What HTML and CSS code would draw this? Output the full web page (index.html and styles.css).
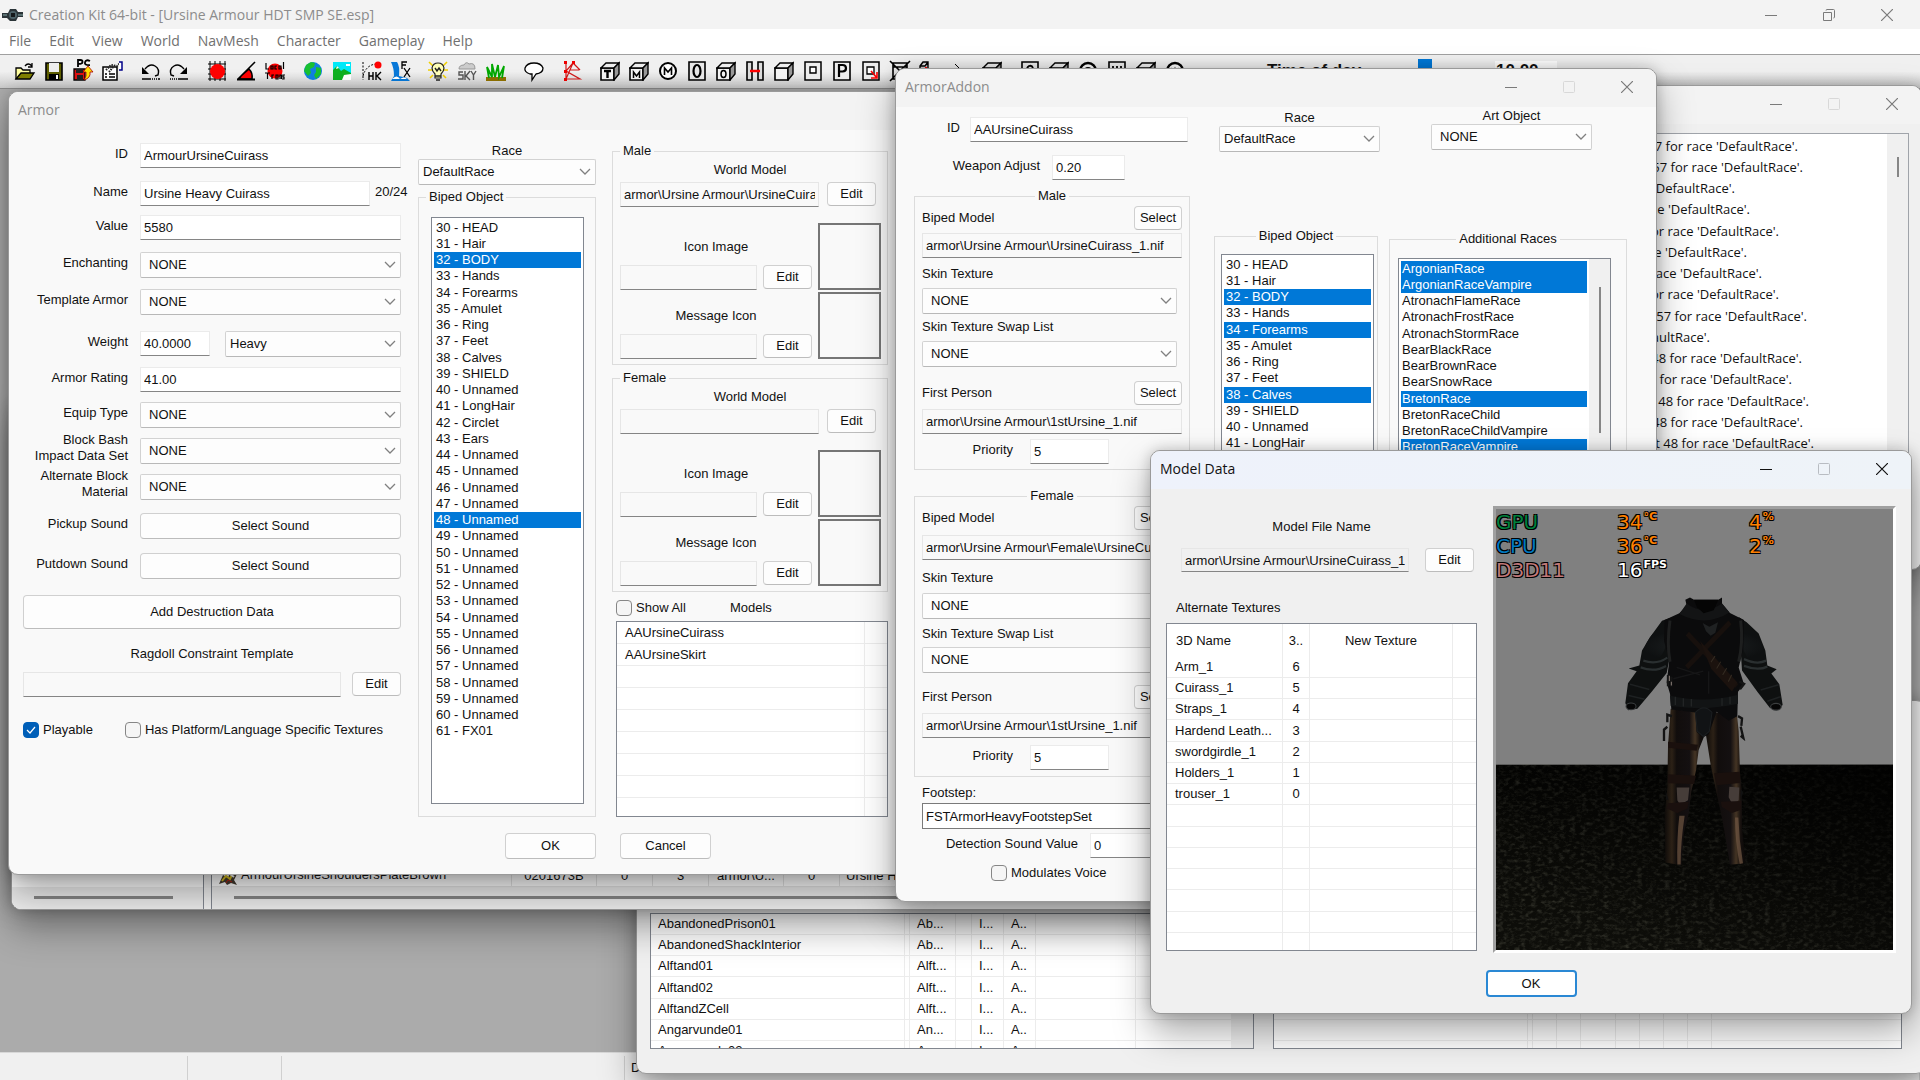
FILE: index.html
```html
<!DOCTYPE html>
<html lang="en">
<head>
<meta charset="utf-8">
<title>Creation Kit 64-bit</title>
<link rel="stylesheet" href="styles.css">
</head>
<body>
<svg class="defs" aria-hidden="true">
  <defs>
    <symbol id="cube" viewBox="0 0 20 20"><path d="M1 7h13v12H1z" fill="#f4f4f4" stroke="#000" stroke-width="1.6"/><path d="M1 7l5-5h13l-5 5z" fill="#eee" stroke="#000" stroke-width="1.4"/><path d="M14 7l5-5v11l-5 6z" fill="#999" stroke="#000" stroke-width="1.4"/></symbol>
    <symbol id="min" viewBox="0 0 12 12"><path d="M0 6.5h12" stroke="currentColor"/></symbol>
    <symbol id="max" viewBox="0 0 12 12"><rect x=".5" y=".5" width="11" height="11" rx="1" fill="none" stroke="currentColor"/></symbol>
    <symbol id="close" viewBox="0 0 12 12"><path d="M0 0l12 12M12 0L0 12" stroke="currentColor" stroke-width="1.2"/></symbol>
  </defs>
</svg>

<div class="app">
  <header class="app-title">
    <svg class="app-icon" viewBox="0 0 22 16"><path d="M0 6h6l2-4h6l2 3h5v5h-5l-2 4H8l-3-3H0z" fill="#2b3438"/><circle cx="11" cy="8" r="4" fill="#4d6268"/><path d="M1 8h4M16 8h5" stroke="#8aa"/><path d="M9 6h4v4H9z" fill="#15191b"/></svg>
    <h1>Creation Kit 64-bit - [Ursine Armour HDT SMP SE.esp]</h1>
    <div class="caption">
      <button aria-label="Minimize"><svg><use href="#min"/></svg></button>
      <button aria-label="Restore"><svg viewBox="0 0 12 12"><path d="M.5 3.5h8v8h-8zM3 1.5q0-1 1-1h6.500q1 0 1 1v6.500q0 1-1 1" fill="none" stroke="currentColor"/></svg></button>
      <button aria-label="Close"><svg><use href="#close"/></svg></button>
    </div>
  </header>
  <nav class="menu">
    <a href="#">File</a><a href="#">Edit</a><a href="#">View</a><a href="#">World</a><a href="#">NavMesh</a><a href="#">Character</a><a href="#">Gameplay</a><a href="#">Help</a>
  </nav>
  <div class="toolbar">
    <div class="tools">
      <button aria-label="Open"><svg viewBox="0 0 20 20"><path d="M1 18V7h5l2 2h7v3" fill="#ffffa0" stroke="#000" stroke-width="1.3"/><path d="M1 18l5-6h13l-4 6z" fill="#808000" stroke="#000" stroke-width="1.3"/><path d="M10 5q3-4 7 0m0-3v4h-4" fill="none" stroke="#000" stroke-width="1.3"/></svg></button>
      <button aria-label="Save"><svg viewBox="0 0 20 20"><path d="M2 2h16v17H2z" fill="#606000" stroke="#000" stroke-width="1.6"/><path d="M5 2h10v9H5z" fill="#eee"/><path d="M5 13h10v6H5z" fill="#000"/><path d="M12 14h2v4h-2z" fill="#fff"/></svg></button>
      <button aria-label="Save for PC"><svg viewBox="0 0 20 20"><path d="M1 8h11v11H1z" fill="#e01010" stroke="#000" stroke-width="1.300"/><path d="M3 8h7v4H3zM4 14h6v5H4z" fill="#222"/><path d="M5 6V-1h2.500q2 0 2 1.800T7.500 2.800H5M17 0q-4-2-5 1.200t5 3" fill="none" stroke="#000" stroke-width="1.800"/><path d="M15 5l5 6h-3q1 6-6 8 3-4 2-8h-3z" fill="#ffe000" stroke="#a00" stroke-width=".8"/></svg></button>
      <button aria-label="Preferences"><svg viewBox="0 0 20 20"><path d="M1 6h14v13H1z" fill="#fff" stroke="#000" stroke-width="1.5"/><path d="M3 13h2m2 0h6M3 16h2m2 0h6" stroke="#000" stroke-width="1.3"/><path d="M4 9l5-5 6 1 3-3M7 11l5-6" stroke="#222" stroke-width="2" stroke-dasharray="1.500 1" fill="none"/><path d="M17 1h3v8h-3" fill="#fff" stroke="#008" stroke-width="1.500"/></svg></button>
      <span class="gap"></span>
      <button aria-label="Undo"><svg viewBox="0 0 20 20"><path d="M5 8q5-6 10-3t3 9l-3 1" fill="none" stroke="#000" stroke-width="1.400"/><path d="M2 6v7h7z"/><path d="M2 18h18" stroke="#000" stroke-width="1.600" stroke-dasharray="9 1 1 1 1 1 1 1"/></svg></button>
      <button aria-label="Redo"><svg viewBox="0 0 20 20"><path d="M15 8q-5-6-10-3T2 14l3 1" fill="none" stroke="#000" stroke-width="1.400"/><path d="M18 6v7h-7z"/><path d="M1 18h18" stroke="#000" stroke-width="1.600" stroke-dasharray="1 1 1 1 1 1 1 1 11"/></svg></button>
      <span class="gap"></span>
      <button aria-label="Snap to grid"><svg viewBox="0 0 20 20"><path d="M1 3h18M1 8h18M1 13h18M1 18h18M3 0v20M8 0v20M13 0v20M18 0v20" stroke="#000"/><circle cx="10.500" cy="10.500" r="7.500" fill="#f00"/></svg></button>
      <button aria-label="Snap to angle"><svg viewBox="0 0 20 20"><path d="M2 18L19 1M5 15l8-7q4 4 3 10H3z" fill="#f00" stroke="#000" stroke-width="1.600"/><path d="M1 18.500h18" stroke="#000" stroke-width="2"/></svg></button>
      <button aria-label="Local translation"><svg viewBox="0 0 20 20"><circle cx="10" cy="10" r="7.500" fill="#f00"/><path d="M1 2v6h3M6 5h2v3H6zM12 5h-2v3h2M14 5h2v3h-2zM18.500 1v7M0 12h5M2.500 12v6M7 18v-4h2M11 14h2v4h-2zM15 18v-4h1.500v4M20 14h-2v2h1v2h-2" fill="none" stroke="#000" stroke-width="1.200"/></svg></button>
      <span class="gap"></span>
      <button aria-label="World"><svg viewBox="0 0 20 20"><circle cx="10" cy="10" r="9" fill="#1080e0"/><path d="M3 4l5-3 4 1-1 4-4 2 1 4-3 3-4-5zM13 6l5 1v6l-5 5-2-4 2-3z" fill="#18c030"/></svg></button>
      <button aria-label="Landscape"><svg viewBox="0 0 20 20"><path d="M1 1h18v18H1z" fill="#00e8f8"/><path d="M1 9l4-4 4 5 3-2 7 4v7H1z" fill="#10b020"/><path d="M10 19l2-5 7-1v6z" fill="#fff"/><path d="M5 5l2 2-3 1zM14 3h4v2h-4z" fill="#fff"/></svg></button>
      <button aria-label="Havok"><svg viewBox="0 0 20 20"><path d="M2 1v18M2 15Q5 4 15 3" fill="none" stroke="#000" stroke-dasharray="2 1.500"/><circle cx="17" cy="4" r="3.500" fill="#f00"/><path d="M8 11v8m0-4h4m0-4v8M15 11v8m5-8l-4 4 4 4" fill="none" stroke="#000" stroke-width="1.400"/></svg></button>
      <button aria-label="Effects"><svg viewBox="0 0 20 20"><path d="M1 1h6q3 4 2 14l8 2 3 3H1l3-5q0-8-3-14z" fill="#0878d8"/><path d="M2 18q5-5 8 0 4-3 7 0" fill="#fff"/><path d="M12 8V1h5m-5 3h4M14 7l6 9m0-9l-6 9" fill="none" stroke="#000" stroke-width="1.300"/></svg></button>
      <span class="gap"></span>
      <button aria-label="Light"><svg viewBox="0 0 20 20"><path d="M1 1l4 4M19 1l-4 4M0 9h4M16 9h4M2 17l3-3M18 17l-3-3" stroke="#f0d000" stroke-width="1.600"/><path d="M7 13q-3-3-3-6 1-5 6-5t6 5q0 3-3 6v4H7z" fill="#ffffb8" stroke="#222" stroke-width="1.200"/><path d="M7 7l2 3 2-3 2 3M7 15h6M8 19h4" fill="none" stroke="#222" stroke-width="1.400"/></svg></button>
      <button aria-label="Sky"><svg viewBox="0 0 20 20"><path d="M2 8q0-4 5-4 2-4 5-1 6-2 6 5z" fill="#ccc" stroke="#999"/><path d="M6 11H2v3h4v4H1M8 10v9m5-9l-4 5 4 4M14 10l2.500 4L19 10m-2.500 4v5" fill="none" stroke="#555" stroke-width="1.400"/></svg></button>
      <button aria-label="Grass"><svg viewBox="0 0 20 20"><path d="M0 16h20v4H0z" fill="#907000"/><path d="M3 17L1 6l5 10V3l3 13 3-12 1 12 5-11-2 12" fill="none" stroke="#00a800" stroke-width="1.800"/></svg></button>
      <span class="gap"></span>
      <button aria-label="Dialogue"><svg viewBox="0 0 20 20"><path d="M6 13Q0 11 1 7q2-5 9-5t9 5q0 5-7 6l-4 6v-6z" fill="#fff" stroke="#000" stroke-width="1.300"/></svg></button>
      <span class="gap"></span>
      <button aria-label="NavMesh"><svg viewBox="0 0 20 20"><path d="M4 1v17h14L4 10l7-8 7 7M4 18l7-16M8 9h9" fill="none" stroke="#d01818" stroke-width="1.200"/><path d="M2 0h3v3H2zM10 0h3v3h-3zM2 9h3v3H2zM2 17h3v3H2z" fill="#e00"/></svg></button>
      <span class="gap"></span>
      <button aria-label="Trigger"><svg viewBox="0 0 20 20"><use href="#cube"/><path d="M4 10h7M7.500 10v7" stroke="#000" stroke-width="2.400"/></svg></button>
      <button aria-label="Multibound"><svg viewBox="0 0 20 20"><use href="#cube"/><path d="M4.500 17v-6l3 4 3-4v6" fill="none" stroke="#000" stroke-width="1.500"/></svg></button>
      <button aria-label="Markers"><svg viewBox="0 0 20 20"><circle cx="10" cy="10" r="8" fill="#fff" stroke="#000" stroke-width="2"/><path d="M6.500 14V7l3.500 4 3.500-4v7" fill="none" stroke="#000" stroke-width="1.600"/></svg></button>
      <button aria-label="Occlusion plane"><svg viewBox="0 0 20 20"><path d="M2 1h16v18H2z" fill="#e8e8e8" stroke="#000" stroke-width="1.600"/><ellipse cx="10" cy="10" rx="3.500" ry="6" fill="none" stroke="#000" stroke-width="2.200"/></svg></button>
      <button aria-label="Occlusion cube"><svg viewBox="0 0 20 20"><use href="#cube"/><ellipse cx="7.500" cy="13" rx="2.500" ry="3.500" fill="none" stroke="#000" stroke-width="1.500"/></svg></button>
      <button aria-label="Portal link"><svg viewBox="0 0 20 20"><path d="M2 1h5v18H2zM13 1h5v18h-5z" fill="#ddd" stroke="#000" stroke-width="1.600"/><path d="M5 10h10" stroke="#f00" stroke-width="2.500"/></svg></button>
      <button aria-label="Room"><svg viewBox="0 0 20 20"><use href="#cube"/></svg></button>
      <button aria-label="Portal"><svg viewBox="0 0 20 20"><path d="M2 1h16v18H2z" fill="#eee" stroke="#000" stroke-width="1.500"/><path d="M7 6h6v6H7z" fill="#fff" stroke="#000" stroke-width="1.400"/></svg></button>
      <button aria-label="Primitive"><svg viewBox="0 0 20 20"><path d="M2 1h16v18H2z" fill="#eee" stroke="#000" stroke-width="1.600"/><path d="M7 16V4h3.500q3.500 0 3.500 3.200T10.500 10.500H7" fill="none" stroke="#000" stroke-width="2.200"/></svg></button>
      <button aria-label="Link"><svg viewBox="0 0 20 20"><path d="M2 1h16v18H2z" fill="#eee" stroke="#000" stroke-width="1.500"/><path d="M6 6h7v7H6z" fill="#fff" stroke="#000" stroke-width="1.300"/><path d="M10 10l6 7m0-6v6h-6" fill="none" stroke="#f00" stroke-width="1.600"/></svg></button>
      <button aria-label="Hide"><svg viewBox="0 0 20 20"><path d="M3 2h14v16H3zM0 0l20 20M20 0L0 20M3 6h14" fill="none" stroke="#000" stroke-width="1.600"/></svg></button>
      <button class="narrow" aria-label="Collision"><svg viewBox="0 0 10 20"><path d="M1 5l3-4h5v8H1zM1 5h5l3-4" fill="#ccc" stroke="#000" stroke-width="1.400"/><path d="M7 6v4" stroke="#f00" stroke-width="2"/></svg></button>
      <span class="gap"></span>
      <button aria-label="Line"><svg viewBox="0 0 20 20"><path d="M8 3l6 6" stroke="#000"/></svg></button>
      <span class="gap short"></span>
      <button aria-label="Trap"><svg viewBox="0 0 20 20"><use href="#cube"/><path d="M4 10h7" stroke="#000" stroke-width="2"/></svg></button>
      <span class="gap"></span>
      <button aria-label="Combat"><svg viewBox="0 0 20 20"><path d="M2 1h16v18H2z" fill="#eee" stroke="#000" stroke-width="1.600"/><path d="M13 7q-1-3-4-2-3 2-2 6" fill="none" stroke="#000" stroke-width="1.800"/></svg></button>
      <button aria-label="Box"><svg viewBox="0 0 20 20"><use href="#cube"/></svg></button>
      <button aria-label="Sound"><svg viewBox="0 0 20 20"><circle cx="10" cy="10" r="8" fill="#fff" stroke="#000" stroke-width="2.400"/><circle cx="10" cy="10" r="3" fill="none" stroke="#000" stroke-width="2"/></svg></button>
      <button aria-label="Water"><svg viewBox="0 0 20 20"><path d="M2 1h16v18H2z" fill="#eee" stroke="#000" stroke-width="1.600"/><path d="M6 5v9h8V5M10 5v9" fill="none" stroke="#000" stroke-width="1.800"/></svg></button>
      <button aria-label="Activator"><svg viewBox="0 0 20 20"><use href="#cube"/></svg></button>
      <button aria-label="Wind"><svg viewBox="0 0 20 20"><circle cx="10" cy="10" r="8" fill="#fff" stroke="#000" stroke-width="2.400"/><path d="M6 7l2 7 2-6 2 6 2-7" fill="none" stroke="#000" stroke-width="1.600"/></svg></button>
    </div>
    <label class="tod" for="tod">Time of day</label>
    <input id="tod" class="tod-slider" type="range" min="0" max="24" value="10">
    <input class="tod-value" type="text" value="10.00" aria-label="Hour">
  </div>
  <main class="workspace"></main>
  <footer class="status"><span></span><span></span><span></span><span>Done.</span></footer>
</div>

<section class="window warnings" aria-label="Warnings">
  <div class="titlebar"><h2></h2><div class="caption">
    <button aria-label="Minimize"><svg><use href="#min"/></svg></button>
    <button aria-label="Maximize" disabled><svg><use href="#max"/></svg></button>
    <button aria-label="Close"><svg><use href="#close"/></svg></button></div></div>
  <div class="log">
    <ul>
      <li style="width:378px">57 for race 'DefaultRace'.</li>
      <li style="width:383px">57 for race 'DefaultRace'.</li>
      <li style="width:315px">'DefaultRace'.</li>
      <li style="width:330px">race 'DefaultRace'.</li>
      <li style="width:359px">for race 'DefaultRace'.</li>
      <li style="width:327px">race 'DefaultRace'.</li>
      <li style="width:342px">race 'DefaultRace'.</li>
      <li style="width:359px">for race 'DefaultRace'.</li>
      <li style="width:387px">57 for race 'DefaultRace'.</li>
      <li style="width:290px">'DefaultRace'.</li>
      <li style="width:382px">48 for race 'DefaultRace'.</li>
      <li style="width:372px">for race 'DefaultRace'.</li>
      <li style="width:389px">48 for race 'DefaultRace'.</li>
      <li style="width:383px">48 for race 'DefaultRace'.</li>
      <li style="width:394px">slot 48 for race 'DefaultRace'.</li>
    </ul>
    <div class="vscroll"><span></span></div>
  </div>
</section>

<section class="window cellview" aria-label="Cell View">
  <div class="grid-box cells">
    <table>
      <colgroup><col class="w254"><col class="w5"><col class="w46"><col class="w16"><col class="w32"><col class="w32"><col class="w100"><col></colgroup>
      <tbody>
        <tr><td>AbandonedPrison01</td><td></td><td>Ab...</td><td></td><td>I...</td><td>A..</td><td></td><td></td></tr>
        <tr><td>AbandonedShackInterior</td><td></td><td>Ab...</td><td></td><td>I...</td><td>A..</td><td></td><td></td></tr>
        <tr><td>Alftand01</td><td></td><td>Alft...</td><td></td><td>I...</td><td>A..</td><td></td><td></td></tr>
        <tr><td>Alftand02</td><td></td><td>Alft...</td><td></td><td>I...</td><td>A..</td><td></td><td></td></tr>
        <tr><td>AlftandZCell</td><td></td><td>Alft...</td><td></td><td>I...</td><td>A..</td><td></td><td></td></tr>
        <tr><td>Angarvunde01</td><td></td><td>An...</td><td></td><td>I...</td><td>A..</td><td></td><td></td></tr>
        <tr><td>Angarvunde02</td><td></td><td>An...</td><td></td><td>I...</td><td>A..</td><td></td><td></td></tr>
      </tbody>
    </table>
    <div class="track"></div>
  </div>
  <div class="grid-box refs">
    <table>
      <colgroup><col class="w254"><col class="w5"><col class="w24"><col class="w24"><col class="w35"><col class="w24"><col class="w24"><col class="w24"><col class="w24"><col></colgroup>
      <tbody>
        <tr><td></td><td></td><td></td><td></td><td></td><td></td><td></td><td></td><td></td><td></td></tr>
        <tr><td></td><td></td><td></td><td></td><td></td><td></td><td></td><td></td><td></td><td></td></tr>
        <tr><td></td><td></td><td></td><td></td><td></td><td></td><td></td><td></td><td></td><td></td></tr>
        <tr><td></td><td></td><td></td><td></td><td></td><td></td><td></td><td></td><td></td><td></td></tr>
        <tr><td></td><td></td><td></td><td></td><td></td><td></td><td></td><td></td><td></td><td></td></tr>
        <tr><td></td><td></td><td></td><td></td><td></td><td></td><td></td><td></td><td></td><td></td></tr>
        <tr><td></td><td></td><td></td><td></td><td></td><td></td><td></td><td></td><td></td><td></td></tr>
      </tbody>
    </table>
  </div>
</section>

<section class="window objects" aria-label="Object Window">
  <div class="tree"><div class="hscroll"><span></span></div></div>
  <div class="items">
    <table>
      <colgroup><col class="w300"><col class="w85"><col class="w56"><col class="w56"><col class="w75"><col class="w56"><col></colgroup>
      <tbody><tr><td><svg viewBox="0 0 20 20"><path d="M1 18l4-9 5 3 3-9 6 5-3 6 3 5-6-2-4 2-2-3z" fill="#443c30"/><path d="M4 15l4-5 4 3 4-8" stroke="#d8c020" stroke-width="2" fill="none"/><path d="M8 17l2-3 4 2" stroke="#c02010" fill="none"/><path d="M12 8l4 3" stroke="#fff" stroke-width="2"/></svg>ArmourUrsineShouldersPlateBrown</td><td>0201673B</td><td>0</td><td>3</td><td>armor\U...</td><td>0</td><td>Ursine Heavy</td></tr></tbody>
    </table>
    <div class="hscroll"><span></span></div>
  </div>
</section>

<section class="window armor" aria-label="Armor">
  <div class="titlebar"><h2>Armor</h2></div>
  <form class="armor-body">
    <div class="armor-main">
      <div class="props">
        <label for="a-id">ID</label><div><input id="a-id" type="text" value="ArmourUrsineCuirass"></div>
        <label for="a-name">Name</label><div><input id="a-name" class="w230" type="text" value="Ursine Heavy Cuirass"><span>20/24</span></div>
        <label for="a-value">Value</label><div><input id="a-value" type="text" value="5580"></div>
        <label for="a-ench">Enchanting</label><div><select id="a-ench"><option>NONE</option></select></div>
        <label for="a-tpl">Template Armor</label><div><select id="a-tpl"><option>NONE</option></select></div>
        <label for="a-weight">Weight</label><div class="split"><input id="a-weight" class="w70" type="text" value="40.0000"><select class="tight" aria-label="Weight class"><option>Heavy</option></select></div>
        <label for="a-rating">Armor Rating</label><div><input id="a-rating" type="text" value="41.00"></div>
        <label for="a-equip">Equip Type</label><div><select id="a-equip"><option>NONE</option></select></div>
        <label class="two" for="a-bash">Block Bash<br>Impact Data Set</label><div><select id="a-bash"><option>NONE</option></select></div>
        <label class="two" for="a-alt">Alternate Block<br>Material</label><div><select id="a-alt"><option>NONE</option></select></div>
        <label for="a-pick">Pickup Sound</label><div><button type="button" id="a-pick">Select Sound</button></div>
        <label for="a-put">Putdown Sound</label><div><button type="button" id="a-put">Select Sound</button></div>
        <button type="button" class="destruct">Add Destruction Data</button>
        <label class="ragdoll-label" for="a-rag">Ragdoll Constraint Template</label>
        <div class="ragdoll"><input id="a-rag" type="text" readonly><button type="button" class="small">Edit</button></div>
        <div class="checks">
          <label><input type="checkbox" checked>Playable</label>
          <label><input type="checkbox">Has Platform/Language Specific Textures</label>
        </div>
      </div>
      <div class="biped">
        <label for="a-race">Race</label>
        <select id="a-race" class="tight"><option>DefaultRace</option></select>
        <fieldset>
          <legend>Biped Object</legend>
          <select class="listbox" multiple aria-label="Biped Object">
            <option>30 - HEAD</option><option>31 - Hair</option><option selected>32 - BODY</option><option>33 - Hands</option><option>34 - Forearms</option><option>35 - Amulet</option><option>36 - Ring</option><option>37 - Feet</option><option>38 - Calves</option><option>39 - SHIELD</option><option>40 - Unnamed</option><option>41 - LongHair</option><option>42 - Circlet</option><option>43 - Ears</option><option>44 - Unnamed</option><option>45 - Unnamed</option><option>46 - Unnamed</option><option>47 - Unnamed</option><option selected>48 - Unnamed</option><option>49 - Unnamed</option><option>50 - Unnamed</option><option>51 - Unnamed</option><option>52 - Unnamed</option><option>53 - Unnamed</option><option>54 - Unnamed</option><option>55 - Unnamed</option><option>56 - Unnamed</option><option>57 - Unnamed</option><option>58 - Unnamed</option><option>59 - Unnamed</option><option>60 - Unnamed</option><option>61 - FX01</option>
          </select>
        </fieldset>
      </div>
      <div class="models">
        <fieldset class="model-set">
          <legend>Male</legend>
          <label for="m-world">World Model</label>
          <div class="world"><input id="m-world" type="text" readonly value="armor\Ursine Armour\UrsineCuirass_1.nif"><button type="button" class="small">Edit</button></div>
          <div class="icon-slot"><label for="m-icon">Icon Image</label><input id="m-icon" type="text" readonly><button type="button" class="small">Edit</button><span class="pic"></span></div>
          <div class="icon-slot"><label for="m-msg">Message Icon</label><input id="m-msg" type="text" readonly><button type="button" class="small">Edit</button><span class="pic"></span></div>
        </fieldset>
        <fieldset class="model-set">
          <legend>Female</legend>
          <label for="f-world">World Model</label>
          <div class="world"><input id="f-world" type="text" readonly><button type="button" class="small">Edit</button></div>
          <div class="icon-slot"><label for="f-icon">Icon Image</label><input id="f-icon" type="text" readonly><button type="button" class="small">Edit</button><span class="pic"></span></div>
          <div class="icon-slot"><label for="f-msg">Message Icon</label><input id="f-msg" type="text" readonly><button type="button" class="small">Edit</button><span class="pic"></span></div>
        </fieldset>
        <div class="show-all"><label><input type="checkbox">Show All</label><span>Models</span></div>
        <div class="grid-box model-list">
          <table>
            <colgroup><col class="w248"><col></colgroup>
            <tbody>
              <tr><td>AAUrsineCuirass</td><td></td></tr>
              <tr><td>AAUrsineSkirt</td><td></td></tr>
              <tr><td></td><td></td></tr><tr><td></td><td></td></tr><tr><td></td><td></td></tr><tr><td></td><td></td></tr><tr><td></td><td></td></tr><tr><td></td><td></td></tr><tr><td></td><td></td></tr>
            </tbody>
          </table>
        </div>
      </div>
    </div>
    <div class="armor-foot"><button type="button">OK</button><button type="button">Cancel</button></div>
  </form>
</section>

<section class="window addon" aria-label="ArmorAddon">
  <div class="titlebar"><h2>ArmorAddon</h2><div class="caption">
    <button aria-label="Minimize"><svg><use href="#min"/></svg></button>
    <button aria-label="Maximize" disabled><svg><use href="#max"/></svg></button>
    <button aria-label="Close"><svg><use href="#close"/></svg></button></div></div>
  <form class="addon-body">
    <div class="addon-left">
      <div class="row id-row"><label for="aa-id">ID</label><input id="aa-id" type="text" value="AAUrsineCuirass"></div>
      <div class="row adj-row"><label for="aa-adj">Weapon Adjust</label><input id="aa-adj" type="text" value="0.20"></div>
      <fieldset class="sex male">
        <legend>Male</legend>
        <div class="sex-grid">
          <div class="pick"><label for="am-b">Biped Model</label><button type="button">Select</button></div>
          <input id="am-b" type="text" readonly value="armor\Ursine Armour\UrsineCuirass_1.nif">
          <label for="am-s">Skin Texture</label>
          <select id="am-s"><option>NONE</option></select>
          <label for="am-w">Skin Texture Swap List</label>
          <select id="am-w"><option>NONE</option></select>
          <div class="pick"><label for="am-f">First Person</label><button type="button">Select</button></div>
          <input id="am-f" type="text" readonly value="armor\Ursine Armour\1stUrsine_1.nif">
          <div class="row prio"><label for="am-p">Priority</label><input id="am-p" type="text" value="5"></div>
        </div>
      </fieldset>
      <fieldset class="sex female">
        <legend>Female</legend>
        <div class="sex-grid">
          <div class="pick"><label for="af-b">Biped Model</label><button type="button">Select</button></div>
          <input id="af-b" type="text" readonly value="armor\Ursine Armour\Female\UrsineCuirass_1.nif">
          <label for="af-s">Skin Texture</label>
          <select id="af-s"><option>NONE</option></select>
          <label for="af-w">Skin Texture Swap List</label>
          <select id="af-w"><option>NONE</option></select>
          <div class="pick"><label for="af-f">First Person</label><button type="button">Select</button></div>
          <input id="af-f" type="text" readonly value="armor\Ursine Armour\1stUrsine_1.nif">
          <div class="row prio"><label for="af-p">Priority</label><input id="af-p" type="text" value="5"></div>
        </div>
      </fieldset>
      <div class="foot">
        <label for="aa-foot">Footstep:</label>
        <input id="aa-foot" class="boxed" type="text" value="FSTArmorHeavyFootstepSet">
        <div class="row detect"><label for="aa-det">Detection Sound Value</label><input id="aa-det" type="text" value="0"></div>
        <label class="voice"><input type="checkbox">Modulates Voice</label>
      </div>
    </div>
    <div class="addon-right">
      <div class="pair">
        <div class="race"><label for="aa-race">Race</label><select id="aa-race" class="tight"><option>DefaultRace</option></select></div>
        <div class="art"><label for="aa-art">Art Object</label><select id="aa-art"><option>NONE</option></select></div>
      </div>
      <div class="lists">
        <fieldset class="bp">
          <legend>Biped Object</legend>
          <select class="listbox" multiple aria-label="Biped Object">
            <option>30 - HEAD</option><option>31 - Hair</option><option selected>32 - BODY</option><option>33 - Hands</option><option selected>34 - Forearms</option><option>35 - Amulet</option><option>36 - Ring</option><option>37 - Feet</option><option selected>38 - Calves</option><option>39 - SHIELD</option><option>40 - Unnamed</option><option>41 - LongHair</option>
          </select>
        </fieldset>
        <fieldset class="races">
          <legend>Additional Races</legend>
          <div class="scrolled">
            <select class="listbox" multiple aria-label="Additional Races">
              <option selected>ArgonianRace</option><option selected>ArgonianRaceVampire</option><option>AtronachFlameRace</option><option>AtronachFrostRace</option><option>AtronachStormRace</option><option>BearBlackRace</option><option>BearBrownRace</option><option>BearSnowRace</option><option selected>BretonRace</option><option>BretonRaceChild</option><option>BretonRaceChildVampire</option><option selected>BretonRaceVampire</option>
            </select>
            <span class="thumb"></span>
          </div>
        </fieldset>
      </div>
    </div>
  </form>
</section>

<section class="window modeldata" aria-label="Model Data">
  <div class="titlebar"><h2>Model Data</h2><div class="caption">
    <button aria-label="Minimize"><svg><use href="#min"/></svg></button>
    <button aria-label="Maximize" disabled><svg><use href="#max"/></svg></button>
    <button aria-label="Close"><svg><use href="#close"/></svg></button></div></div>
  <form class="md-body">
    <div class="md-left">
      <label class="md-file" for="md-file">Model File Name</label>
      <div class="md-row"><input id="md-file" type="text" readonly value="armor\Ursine Armour\UrsineCuirass_1"><button type="button" class="small">Edit</button></div>
      <p class="md-alt">Alternate Textures</p>
      <div class="grid-box textures">
        <table>
          <colgroup><col class="w116"><col class="w27"><col class="w143"><col></colgroup>
          <thead><tr><th>3D Name</th><th>3..</th><th>New Texture</th><th></th></tr></thead>
          <tbody>
            <tr><td>Arm_1</td><td>6</td><td></td><td></td></tr>
            <tr><td>Cuirass_1</td><td>5</td><td></td><td></td></tr>
            <tr><td>Straps_1</td><td>4</td><td></td><td></td></tr>
            <tr><td>Hardend Leath...</td><td>3</td><td></td><td></td></tr>
            <tr><td>swordgirdle_1</td><td>2</td><td></td><td></td></tr>
            <tr><td>Holders_1</td><td>1</td><td></td><td></td></tr>
            <tr><td>trouser_1</td><td>0</td><td></td><td></td></tr>
            <tr><td></td><td></td><td></td><td></td></tr><tr><td></td><td></td><td></td><td></td></tr><tr><td></td><td></td><td></td><td></td></tr><tr><td></td><td></td><td></td><td></td></tr><tr><td></td><td></td><td></td><td></td></tr><tr><td></td><td></td><td></td><td></td></tr><tr><td></td><td></td><td></td><td></td></tr>
          </tbody>
        </table>
      </div>
    </div>
    <div class="preview">
      <svg viewBox="78 48 1191 1175" preserveAspectRatio="none">
        <defs>
          <linearGradient id="ground" x1="0" y1="0" x2="0" y2="1"><stop offset="0" stop-color="#050503"/><stop offset=".3" stop-color="#090906"/><stop offset="1" stop-color="#0e0e0a"/></linearGradient>
          <filter id="soil" x="0" y="0" width="1" height="1"><feTurbulence type="fractalNoise" baseFrequency=".06 .11" numOctaves="3" seed="7"/><feColorMatrix values="0 0 0 0 .26  0 0 0 0 .26  0 0 0 0 .19  1.500 1.500 0 0 -1.400"/></filter>
          <linearGradient id="leg" x1="0" x2="1" y1="0" y2="0"><stop offset="0" stop-color="#0e0b09"/><stop offset=".18" stop-color="#2c2116"/><stop offset=".3" stop-color="#110d0c"/><stop offset=".62" stop-color="#141011"/><stop offset=".76" stop-color="#443424"/><stop offset=".88" stop-color="#140f0d"/><stop offset="1" stop-color="#0a0807"/></linearGradient>
          <radialGradient id="pauldron"><stop offset="0" stop-color="#222627"/><stop offset="1" stop-color="#0e1011"/></radialGradient>
          <linearGradient id="shade" x1="0" x2="1" y1="1" y2="0"><stop offset=".2" stop-color="#000" stop-opacity="0"/><stop offset="1" stop-color="#000" stop-opacity=".8"/></linearGradient>
        </defs>
        <rect x="78" y="48" width="1191" height="681" fill="#808080"/>
        <rect x="78" y="729" width="1191" height="494" fill="url(#ground)"/>
        <rect x="78" y="729" width="1191" height="494" filter="url(#soil)" opacity=".3"/>
        <rect x="78" y="729" width="1191" height="494" fill="url(#shade)"/>
        <!-- legs -->
        <path d="M602 580L694 590 704 650 686 690 678 745 664 800 656 860 642 910 634 997 586 990 584 860 592 790 594 680z" fill="url(#leg)"/>
        <path d="M708 650L724 590 800 590 806 640 810 750 816 800 816 900 827 992 780 996 758 880 736 790 722 730z" fill="url(#leg)"/>
        <path d="M628 865q-8 60-6 130l10 0q0-60 12-130zM805 870q2 60 14 122l-10 2q-14-60-14-124z" fill="#715743" opacity=".7"/>
        <path d="M594 668l90 8-4 16-86-8zM594 755l84 4-6 22-78-2zM732 752l78-4v30l-70 6z" fill="#1a100d"/>
        <path d="M620 790l38 0-4 34-24 12-8-12zM778 788l30 2-2 34-18 12-12-20z" fill="#463d39"/>
        <path d="M594 832l62-4-4 18-30 12-32-12zM752 828l62-2-2 24-26 8-30-16z" fill="#1a100e"/>
        <path d="M586 795l10 30-8-4zM812 795l8 8-8 20z" fill="#111"/>
        <!-- arms -->
        <path d="M602 338L576 346 540 390 516 425 508 465 476 473 500 480 474 512 466 565 474 584 502 580 545 535 590 485 600 440z" fill="#0e1010"/>
        <path d="M806 336L830 350 866 380 886 425 892 465 920 475 904 486 928 515 938 570 920 584 900 578 862 535 816 478z" fill="#0e1010"/>
        <path d="M540 390q28-34 50-14 4 50-26 70l-50 6q4-34 26-62zM818 372q40-8 58 38l12 48-54-12q-26-30-16-74z" fill="url(#pauldron)"/>
        <path d="M520 452q40 12 72-8M512 470q42 14 76-4M822 448q40 16 66 4M822 466q42 14 70 2" stroke="#2a2f30" stroke-width="6" fill="none"/>
        <path d="M480 515l58 14M476 545l48 10M872 530l54-14M892 560l40-12" stroke="#1e2122" stroke-width="4"/>
        <ellipse cx="483" cy="574" rx="15" ry="9" fill="#060606" stroke="#3c3f40" stroke-width="3"/><ellipse cx="918" cy="575" rx="16" ry="9" fill="#060606" stroke="#3c3f40" stroke-width="3"/>
        <!-- torso -->
        <path d="M646 290L660 284 672 290 745 290 756 284 756 300 780 325 822 344 820 420 806 470 822 515 804 535 802 600 776 612 740 588 716 648 700 656 680 642 676 590 604 582 600 540 590 510 598 450 582 400 584 344 628 326 650 306z" fill="#0b0b0c"/>
        <path d="M650 300q50 34 106 0l22 24q-70 40-150 4z" fill="#131415"/>
        <path d="M672 290h73l-14 28-30 8-20-16z" fill="#050505"/>
        <path d="M600 345q-10 60 0 110M812 345q8 60-6 110" stroke="#1e1f1f" stroke-width="9" fill="none"/>
        <path d="M652 380L800 520M780 350L650 470" stroke="#17100d" stroke-width="14"/>
        <path d="M690 400l112 110-16 24-62-60z" fill="#1b120e"/>
        <path d="M735 440l-12 16M752 455l-12 18M770 472l-12 18M785 490l-10 18" stroke="#332b22" stroke-width="3"/>
        <path d="M698 352l20 10 26-12-8 28-14 8-14-12z" fill="#1f2122"/>
        <path d="M600 545q100 22 204-2v24q-100 20-202 6z" fill="#121415"/>
        <path d="M616 548v22M640 552v22M664 554v20M756 552v20M780 548v20" stroke="#222425" stroke-width="4"/>
        <path d="M676 590q26-24 50 0l-8 50-18 14-18-14z" fill="#111315" stroke="#1b1e20" stroke-width="3"/>
        <path d="M594 490v30M604 495v26M606 600l-14-4v20M592 628l-10 8v30M804 600l12 6-2 20M812 628l8 30-8-6M808 508l14 6-12 14" stroke="#141414" stroke-width="7" fill="none"/>
        <path d="M598 492v14M604 508v10" stroke="#8a7f78" stroke-width="3"/>
        <path d="M716 480v60M620 470l70 20M610 500l90-20" stroke="#161617" stroke-width="4"/>
      </svg>
      <dl class="osd">
        <dt class="gpu">GPU</dt><dd>34<sup>°C</sup></dd><dd>4<sup>%</sup></dd>
        <dt class="cpu">CPU</dt><dd>36<sup>°C</sup></dd><dd>2<sup>%</sup></dd>
        <dt class="api">D3D11</dt><dd class="fps">16<sup>FPS</sup></dd>
      </dl>
    </div>
    <div class="md-foot"><button type="button" class="default">OK</button></div>
  </form>
</section>
</body>
</html>
```
FILE: styles.css
```css
* { box-sizing: border-box; }
html, body { height: 100%; margin: 0; overflow: hidden; }
body { font: 13px/16px "Liberation Sans", Arial, sans-serif; color: #111; position: relative; }
.defs { display: none; }
h1, h2, p, ul, dl, dd { margin: 0; padding: 0; }
ul { list-style: none; }

/* application frame */
.app { display: flex; flex-direction: column; height: 100%; }
.app-title { display: flex; align-items: center; height: 29px; background: #f3f3f3; padding: 0 4px 0 2px; }
.app-icon { width: 22px; height: 16px; margin-right: 5px; }
h1, h2 { flex: 1; font: 14px/20px "Open Sans", "Noto Sans", sans-serif; color: #8c8c8c; }
.menu { display: flex; gap: 18px; height: 25px; padding-left: 9px; background: #fff; font: 14px/24px "Open Sans", "Noto Sans", sans-serif; }
.menu a { color: #707070; text-decoration: none; }
.toolbar { display: flex; align-items: center; height: 35px; border-top: 1px solid #a0a0a0; border-bottom: 1px solid #8a8a8a; background: linear-gradient(#f0f0f0 50%, #cacaca); padding: 0 0 2px 15px; }
.tools { display: flex; flex: none; gap: 9px; }
.tools button { width: 20px; height: 20px; padding: 0; border: 0; background: none; }
.tools button.narrow { width: 10px; }
.tools svg { display: block; width: 100%; height: 100%; overflow: visible; }
.tools .gap { width: 0; }
.tools .short { margin-left: -3px; }
.tod { flex: none; margin-left: 82px; font: bold 17px/20px "Liberation Sans", Arial, sans-serif; width: 96px; white-space: nowrap; }
.tod-slider { appearance: none; flex: none; width: 104px; height: 26px; margin: 0 11px 0 17px; background: linear-gradient(#c8c8c8, #c8c8c8) center / 100% 2px no-repeat; }
.tod-slider::-webkit-slider-thumb { appearance: none; width: 14px; height: 24px; background: #0078d7; }
input[type="text"].tod-value { flex: none; width: 62px; height: 20px; border: 0; background: #fff; font: bold 17px/20px "Liberation Sans", Arial, sans-serif; padding: 0 1px; }
.workspace { flex: 1; background: #ababab; }
.status { display: flex; height: 28px; background: #f0f0f0; border-top: 1px solid #d8d8d8; padding-top: 3px; }
.status span { border-right: 1px solid #d0d0d0; padding: 4px 6px; }
.status span:nth-child(1) { width: 188px; }
.status span:nth-child(2) { width: 94px; }
.status span:nth-child(3) { width: 343px; }
.status span:nth-child(4) { flex: 1; }

.caption { display: flex; color: #7a7a7a; }
.caption button { display: grid; place-items: center; width: 58px; height: 28px; padding: 0; border: 0; background: none; color: inherit; }
.caption button:disabled { color: #d8d8d8; }
.caption svg { width: 12px; height: 12px; }

/* floating windows */
.window { position: absolute; display: flex; flex-direction: column; border: 1px solid #9a9a9a; border-radius: 10px; background: #f9f9f9; overflow: hidden; box-shadow: 0 18px 36px rgba(0, 0, 0, .34), 0 0 14px rgba(0, 0, 0, .2); }
.titlebar { display: flex; align-items: center; height: 38px; background: #f3f3f3; padding: 0 0 2px 9px; }
.warnings { left: 1400px; top: 85px; width: 522px; height: 485px; background: #f0f0f0; }
.cellview { left: 636px; top: 700px; width: 1290px; height: 374px; background: #f0f0f0; flex-direction: row; align-items: stretch; padding: 212px 23px 24px 13px; gap: 19px; }
.objects { left: 11px; top: 400px; width: 1600px; height: 510px; flex-direction: row; gap: 7px; background: #f0f0f0; }
.armor { left: 8px; top: 91px; width: 896px; height: 784px; }
.addon { left: 895px; top: 68px; width: 762px; height: 834px; }
.modeldata { left: 1150px; top: 450px; width: 762px; height: 564px; background: #f0f0f0; }
.modeldata .titlebar { background: linear-gradient(90deg, #eef2fb, #eef3f8); }
.modeldata h2 { color: #111; }
.modeldata .caption { color: #111; }
.modeldata .caption button:disabled { color: #b8bcc2; }

/* controls */
input, select, button { font: inherit; color: #111; margin: 0; border-radius: 0; outline: 0; }
input[type="text"] { width: 100%; height: 25px; padding: 0 3px; background: #fff; border: 1px solid #ebebeb; border-bottom-color: #858585; }
.window input[type="text"][readonly] { background: transparent; border-color: #e6e6e6; border-bottom-color: #858585; padding: 0 3px; }
select:not(.listbox) { appearance: none; width: 100%; height: 26px; padding: 0 24px 0 8px; border: 1px solid #d2d2d2; border-bottom-color: #b8b8b8; border-radius: 2px; background: #fdfdfd url("data:image/svg+xml,%3Csvg xmlns='http://www.w3.org/2000/svg' width='12' height='8'%3E%3Cpath d='M1 1l5 5 5-5' fill='none' stroke='%23808080' stroke-width='1.3'/%3E%3C/svg%3E") right 4px center no-repeat; }
select.tight:not(.listbox) { padding-left: 4px; }
form button { width: 91px; height: 26px; padding: 0; border: 1px solid #d0d0d0; border-bottom-color: #bcbcbc; border-radius: 4px; background: #fdfdfd; }
form button.small { width: 49px; height: 24px; }
form button.default { height: 27px; border: 2px solid #2a88d4; background: #fff; }
input[type="checkbox"] { appearance: none; flex: none; width: 16px; height: 16px; border: 1px solid #868686; border-radius: 4px; background: #f5f5f5; }
input[type="checkbox"]:checked { border-color: #005fb8; background: #005fb8 url("data:image/svg+xml,%3Csvg xmlns='http://www.w3.org/2000/svg' width='10' height='8'%3E%3Cpath d='M1 4l3 3 5-6' fill='none' stroke='%23fff' stroke-width='1.200'/%3E%3C/svg%3E") center no-repeat; }
fieldset { min-width: 0; margin: 0; padding: 0; border: 1px solid #dcdcdc; }
legend { padding: 0 3px; height: 16px; }
.listbox { display: block; width: 153px; padding: 2px; border: 1px solid #828790; background: #fff; overflow: hidden; scrollbar-width: none; }
.listbox option { height: 16px; min-height: 16px; line-height: 16px; padding: 0 2px; }
.listbox option:nth-child(4n) { height: 17px; }
.listbox option:checked { background: #0078d7 linear-gradient(#0078d7, #0078d7); -webkit-text-fill-color: #fff; }

/* report-style lists */
.grid-box { display: flex; border: 1px solid #828790; background: #fff; overflow: hidden; }
.grid-box table, .items table { flex: 1; width: 100%; table-layout: fixed; border-collapse: separate; border-spacing: 0; }
.grid-box tr { height: 21px; }
.grid-box tr:nth-child(4n) { height: 22px; }
.grid-box td, .grid-box th { padding: 0 0 0 8px; font-weight: normal; text-align: left; white-space: nowrap; overflow: hidden; border-right: 1px solid #ececec; border-bottom: 1px solid #ececec; }
.grid-box td:last-child, .grid-box th:last-child { border-right: 0; }
.w5 { width: 5px; } .w16 { width: 16px; } .w24 { width: 24px; } .w27 { width: 27px; } .w32 { width: 32px; } .w35 { width: 35px; }
.w46 { width: 46px; } .w56 { width: 56px; } .w75 { width: 75px; } .w85 { width: 85px; } .w100 { width: 100px; } .w116 { width: 116px; }
.w143 { width: 143px; } .w248 { width: 248px; } .w254 { width: 254px; } .w300 { width: 300px; }

/* warnings log */
.log { display: flex; margin: 9px 12px 11px 12px; flex: 1; background: #fff; border: 1px solid #a0a4aa; overflow: hidden; }
.log ul { flex: 1; padding: 2px 0 0 6px; font: 13px/21px "Open Sans", "Noto Sans", sans-serif; }
.log li { text-align: right; white-space: nowrap; height: 21px; }
.log li:nth-child(4n) { height: 22px; }
.vscroll { width: 21px; background: #f0f0f0; }
.vscroll span { display: block; width: 2px; height: 20px; margin: 23px auto 0; background: #868686; }

/* cell view */
.cells { width: 604px; flex: none; }
.refs { flex: 1; }
.cellview td { padding-left: 7px; }
.cellview td:nth-child(2) { padding: 0; }
.track { width: 22px; background: #f0f0f0; }

/* object window */
.tree { width: 192px; display: flex; flex-direction: column; justify-content: flex-end; border-right: 1px solid #828790; background: #fff; }
.items { flex: 1; display: flex; flex-direction: column; justify-content: flex-end; border-left: 1px solid #828790; background: #fff; }
.items table { flex: none; }
.items td { height: 22px; padding: 0; text-align: center; border-right: 1px solid #e4e4e4; border-bottom: 1px solid #e4e4e4; white-space: nowrap; overflow: hidden; }
.items td:first-child { padding-left: 6px; text-align: left; }
.items td:last-child { padding-left: 6px; text-align: left; }
.items svg { width: 20px; height: 20px; vertical-align: middle; margin-right: 3px; }
.hscroll { height: 22px; padding: 9px 30px 0 22px; background: #ececec; }
.hscroll span { display: block; height: 3px; background: #868686; }

/* armor */
.armor-body { display: flex; flex-direction: column; padding: 13px 14px 15px; }
.armor-main { display: grid; grid-template-columns: 379px 178px 276px; column-gap: 16px; }
.props { display: grid; grid-template-columns: 105px 261px; column-gap: 12px; grid-template-rows: 38px 34px 37px 37px 42px 36px 35px 36px 36px 39px 40px 42px 34px; align-items: start; align-content: start; }
.props > label { display: flex; align-items: center; justify-content: flex-end; height: 22px; text-align: right; }
.props > label.two { height: 32px; margin-top: -6px; }
.props > div { display: flex; }
.props > div button { width: 100%; }
.props input[type="text"].w230 { flex: none; width: 230px; margin-right: 5px; }
.props div span { padding-top: 3px; white-space: nowrap; }
.props .split { gap: 15px; }
.props input[type="text"].w70 { width: 70px; flex: none; }
.props .destruct { grid-column: 1 / -1; width: 100%; height: 34px; }
.props .ragdoll-label { grid-column: 1 / -1; justify-content: center; height: 16px; margin: 17px 0 10px; }
.props .ragdoll { grid-column: 1 / -1; gap: 11px; }
.props .ragdoll input { flex: 1; }
.props .ragdoll .small { flex: none; width: 49px; }
.props .checks { grid-column: 1 / -1; gap: 32px; margin-top: 25px; white-space: nowrap; }
.checks label, .show-all label, .voice { display: flex; align-items: center; gap: 4px; }
.biped > label { display: block; text-align: center; }
.biped fieldset { margin-top: 4px; padding: 12px; }
.biped legend { margin-left: -5px; }
.biped .listbox { height: 587px; }
.models { display: flex; flex-direction: column; }
.model-set { padding: 3px 7px 5px; margin-bottom: 5px; }
.model-set > label { display: block; text-align: center; }
.world { display: flex; gap: 8px; margin: 4px 0 16px; }
.world input[type="text"] { width: 199px; }
.icon-slot { display: grid; grid-template-columns: 137px 49px 63px; grid-template-rows: 42px 25px; column-gap: 6px; }
.icon-slot + .icon-slot { margin-top: 2px; }
.icon-slot label { grid-column: 1 / 3; text-align: center; padding-top: 16px; }
.pic { grid-area: 1 / 3 / 3 / 4; border: 2px solid #767676; }
.show-all { display: flex; gap: 44px; margin: 3px 0 5px 4px; }
.model-list { height: 196px; margin-left: 4px; }
.model-list tr { height: 22px; }
.armor-foot { display: flex; gap: 24px; margin: 16px 0 0 482px; }

/* armor addon */
.addon-body { display: flex; gap: 24px; padding: 10px 18px; }
.row { display: flex; }
.row label { text-align: right; line-height: 22px; }
.addon-left { width: 276px; flex: none; }
.id-row { gap: 10px; } .id-row label { width: 46px; } .id-row input[type="text"] { width: 218px; }
.adj-row { gap: 12px; margin: 13px 0 8px; } .adj-row label { width: 126px; } .adj-row input[type="text"] { width: 73px; }
.sex { padding: 2px 7px 0; }
.sex legend, .lists legend { margin: 0 auto; }
.sex.female { margin-top: 18px; }
.sex-grid { display: grid; align-items: start; }
.male .sex-grid { grid-template-rows: 27px 33px 22px 31px 22px 40px 28px 30px 30px; }
.female .sex-grid { grid-template-rows: 29px 35px 23px 33px 21px 38px 28px 32px 31px; }
.sex-grid select:not(.listbox) { width: 255px; }
.pick { display: flex; justify-content: space-between; align-items: center; }
.pick button { width: 48px; height: 24px; }
.prio { gap: 17px; } .prio label { width: 91px; } .prio input[type="text"] { width: 79px; }
.foot { padding: 8px 0 0 8px; }
.foot > label:first-child { display: block; margin-bottom: 2px; }
.foot input[type="text"].boxed { height: 26px; border-color: #7a7a7a; }
.detect { gap: 12px; margin-top: 4px; } .detect label { width: 156px; } .detect input[type="text"] { width: 90px; }
.voice { margin: 7px 0 0 69px; }
.addon-right { width: 413px; }
.pair { display: flex; gap: 51px; padding-left: 5px; margin-top: -9px; }
.pair > div { width: 161px; display: flex; flex-direction: column; text-align: center; }
.race { margin-top: 2px; }
.lists { display: grid; grid-template-columns: 164px 238px; gap: 11px; align-items: start; margin-top: 76px; }
.bp { padding: 10px 6px; }
.bp .listbox { height: 380px; }
.races { margin-top: 3px; padding: 11px 8px; }
.scrolled { display: flex; width: 213px; height: 380px; border: 1px solid #828790; background: #f0f0f0; }
.scrolled .listbox { width: 190px; height: 100%; border: 0; }
.scrolled .listbox option { padding: 0 1px; }
.thumb { width: 2px; height: 146px; margin: 28px auto 0; background: #868686; }

/* model data */
.md-body { display: grid; grid-template-columns: 311px 403px; column-gap: 16px; padding: 17px 15px 16px; }
.md-file { display: block; text-align: center; margin: 13px 0 13px; }
.md-row { display: flex; gap: 16px; padding-left: 15px; }
.md-row input[type="text"] { width: 228px; height: 24px; }
.md-alt { margin: 28px 0 7px; padding-left: 10px; }
.textures { height: 328px; }
.textures thead th { height: 33px; border-bottom: 0; padding-left: 9px; }
.textures td { padding-left: 8px; }
.textures th:nth-child(2), .textures td:nth-child(2), .textures thead th:nth-child(3) { padding: 0; text-align: center; }
.preview { position: relative; height: 447px; border: 3px solid; border-color: #a0a0a0 #fff #fff #a0a0a0; }
.preview > svg { display: block; width: 100%; height: 100%; }
.osd { position: absolute; left: 0; top: 1px; display: grid; grid-template-columns: 121px 132px 60px; grid-auto-rows: 24px; font: 20px/24px "DejaVu Sans", Verdana, sans-serif; color: #ff8000; text-shadow: 1px 1px #000, -1px -1px #000, 1px -1px #000, -1px 1px #000; }
.osd dd { display: flex; align-items: flex-start; gap: 1px; }
.osd sup { font: bold 11px/14px "DejaVu Sans", Verdana, sans-serif; }
.gpu { color: #00803c; } .cpu { color: #0078c0; } .api { color: #c07878; }
.osd .fps { color: #fff; }
.md-foot { grid-column: 1 / -1; display: flex; justify-content: center; margin-top: 17px; }
```
